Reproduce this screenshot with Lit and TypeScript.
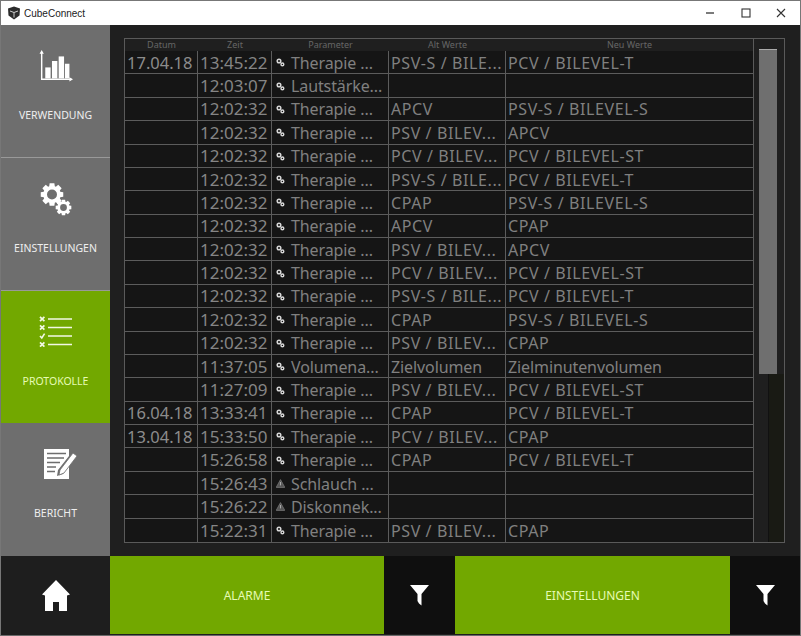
import { LitElement, html, css, svg } from "lit";
import { customElement } from "lit/decorators.js";

type Row = [string, string, "l" | "w", string, string, string];
const T = "Therapie ...";
const rows: Row[] = [
  ["17.04.18", "13:45:22", "l", T, "PSV-S / BILE...", "PCV / BILEVEL-T"],
  ["", "12:03:07", "l", "Lautstärke...", "", ""],
  ["", "12:02:32", "l", T, "APCV", "PSV-S / BILEVEL-S"],
  ["", "12:02:32", "l", T, "PSV / BILEV...", "APCV"],
  ["", "12:02:32", "l", T, "PCV / BILEV...", "PCV / BILEVEL-ST"],
  ["", "12:02:32", "l", T, "PSV-S / BILE...", "PCV / BILEVEL-T"],
  ["", "12:02:32", "l", T, "CPAP", "PSV-S / BILEVEL-S"],
  ["", "12:02:32", "l", T, "APCV", "CPAP"],
  ["", "12:02:32", "l", T, "PSV / BILEV...", "APCV"],
  ["", "12:02:32", "l", T, "PCV / BILEV...", "PCV / BILEVEL-ST"],
  ["", "12:02:32", "l", T, "PSV-S / BILE...", "PCV / BILEVEL-T"],
  ["", "12:02:32", "l", T, "CPAP", "PSV-S / BILEVEL-S"],
  ["", "12:02:32", "l", T, "PSV / BILEV...", "CPAP"],
  ["", "11:37:05", "l", "Volumena...", "Zielvolumen", "Zielminutenvolumen"],
  ["", "11:27:09", "l", T, "PSV / BILEV...", "PCV / BILEVEL-ST"],
  ["16.04.18", "13:33:41", "l", T, "CPAP", "PCV / BILEVEL-T"],
  ["13.04.18", "15:33:50", "l", T, "PCV / BILEV...", "CPAP"],
  ["", "15:26:58", "l", T, "CPAP", "PCV / BILEVEL-T"],
  ["", "15:26:43", "w", "Schlauch ...", "", ""],
  ["", "15:26:22", "w", "Diskonnek...", "", ""],
  ["", "15:22:31", "l", T, "PSV / BILEV...", "CPAP"],
];

const linkIcon = svg`<svg class="ri" width="9" height="9" viewBox="0 0 9 9"><circle cx="3" cy="3" r="1.800" fill="none" stroke="#d8d8d8" stroke-width="1.500"/><circle cx="6.400" cy="6.400" r="1.400" fill="none" stroke="#d8d8d8" stroke-width="1.400"/></svg>`;
const warnIcon = svg`<svg class="ri" width="9" height="9" viewBox="0 0 9 9"><path d="M4.500 .6 8.800 8.400H.2Z" fill="#555" stroke="#777" stroke-width=".8"/><path d="M4.500 3v3.400" stroke="#aaa" stroke-width="1.100"/></svg>`;

const chartIcon = svg`<svg width="34" height="33" viewBox="0 0 38 36" preserveAspectRatio="none" fill="#fff"><path d="M3 3v29h33" fill="none" stroke="#fff" stroke-width="1.600"/><path d="M3 0 5.400 4H.6ZM38 32l-4-2.400v4.800Z"/><rect x="7" y="19" width="6" height="12"/><rect x="14.500" y="12" width="6" height="19"/><rect x="22" y="7" width="6" height="24"/><rect x="29" y="15" width="5" height="16"/></svg>`;

const gear = (cx: number, cy: number, r: number, hole: number, teeth: number) => {
  let d = "";
  for (let i = 0; i < teeth; i++) {
    const a = (i * 2 * Math.PI) / teeth;
    const w = 0.26;
    const p = (ang: number, rad: number) => `${(cx + rad * Math.cos(ang)).toFixed(2)} ${(cy + rad * Math.sin(ang)).toFixed(2)}`;
    d += `${i ? "L" : "M"}${p(a - w * 1.25, r * 0.76)}L${p(a - w * 0.8, r)}L${p(a + w * 0.8, r)}L${p(a + w * 1.25, r * 0.76)}`;
  }
  d += "Z";
  d += `M${cx - hole} ${cy}a${hole} ${hole} 0 1 0 ${2 * hole} 0a${hole} ${hole} 0 1 0 ${-2 * hole} 0Z`;
  return d;
};
const gearsIcon = svg`<svg width="32" height="34" viewBox="0 0 32 34" fill="#fff"><path fill-rule="evenodd" d="${gear(12, 12.5, 11.5, 5, 8)}"/><path fill-rule="evenodd" d="${gear(23.5, 25.5, 8, 3.4, 8)}"/></svg>`;

const x = (y: number) => svg`<path d="M1 ${y - 2.2}l4.400 4.400M5.400 ${y - 2.2}l-4.400 4.400" stroke="#f2f8e4" stroke-width="1.700" fill="none"/>`;
const line = (y: number) => svg`<rect x="9" y="${y - 0.75}" width="24" height="1.500" fill="#f2f8e4"/>`;
const listIcon = svg`<svg width="34" height="31" viewBox="0 0 34 31">${x(3)}${line(3)}${x(11.5)}${line(11.5)}<path d="M1 20l1.800 2 2.800-4.400" stroke="#f2f8e4" stroke-width="1.600" fill="none"/>${line(20)}${x(28.5)}${line(28.5)}</svg>`;

const reportIcon = svg`<svg class="shift" width="34" height="31" viewBox="0 0 34 31"><path d="M0 0h25v7L14 21l-1 6 6-2 6-8v13H0Z" fill="#fff"/><path d="M3 4.500h19M3 9h17M3 13.500h13M3 18h9M3 22.500h8" stroke="#6e6e6e" stroke-width="1.500"/><path d="M16 21 29 4l4 3-13 17-5 2Z" fill="#fff" stroke="#6e6e6e" stroke-width=".8"/></svg>`;

const homeIcon = svg`<svg width="28" height="31" viewBox="0 0 28 31"><path d="M14 0 28 14.500 25 15.500V31H17V22H11V31H3V15.500L0 14.500Z" fill="#fff"/></svg>`;
const filterIcon = svg`<svg width="19" height="21" viewBox="0 0 19 21"><path d="M0 0H19L11.500 9V20.500L9 18.500 7.500 16V9Z" fill="#fff"/></svg>`;

const caps = (s: string) => /^(PSV|PCV|CPAP|APCV)/.test(s);

@customElement("app-root")
export class AppRoot extends LitElement {
  static styles = css`
    :host {
      display: block;
      width: 801px;
      height: 636px;
      box-sizing: border-box;
      background: #1e1e1e;
      border: 1px solid #777;
      border-bottom-color: #6a6a6a;
      font-family: "Noto Sans", "Liberation Sans", sans-serif;
      overflow: hidden;
    }
    .title {
      height: 24px;
      background: #fff;
      display: flex;
      align-items: center;
      color: #222;
      font-size: 10px;
      font-family: "Liberation Sans", sans-serif;
    }
    .logo { margin: 0 3px 0 6px; display: block; }
    .app { flex: 1; }
    .wc { display: flex; padding-right: 1px; }
    .wc span { width: 35.5px; height: 24px; display: flex; align-items: center; justify-content: center; }
    .body { display: grid; grid-template-columns: 109px 1fr; grid-template-rows: 531px 78px; height: 609px; }
    .side { display: grid; grid-template-rows: repeat(4, 1fr); background: #6e6e6e; }
    .nav {
      display: flex;
      flex-direction: column;
      align-items: center;
      color: #eee;
      font-size: 10.5px;
      box-sizing: border-box;
      border-bottom: 1px solid #999;
    }
    .nav:last-child { border-bottom: 0; }
    .nav.on { background: #72a800; color: #e6fbb4; border-bottom: 1px solid #72a800; }
    .ic { height: 54px; margin-top: 14px; display: flex; align-items: center; justify-content: center; }
    .shift { margin-left: 11px; }
    .lb { margin-top: 14px; line-height: 16px; }
    .main { padding: 13px 15px 13px 14px; box-sizing: border-box; background: #1f1f1f; min-width: 0; min-height: 0; height: 531px; }
    .frame {
      height: 100%;
      box-sizing: border-box;
      border: 1px solid #5a5a5a;
      display: grid;
      grid-template-columns: 629px 1fr;
      grid-template-rows: minmax(0, 1fr);
    }
    .tbl { display: grid; grid-template-rows: 12px repeat(21, minmax(0, 1fr)); border-right: 1px solid #5a5a5a; min-width: 0; min-height: 0; }
    .row { display: grid; grid-template-columns: 73px 74px 117px 117px 1fr; grid-template-rows: minmax(0, 1fr); background: #151515; border-bottom: 1px solid #5c5c5c; min-height: 0; }
    .row:last-child { border-bottom: 0; }
    .row.head { background: #1f1f1f; border-bottom: 0; }
    .cell {
      color: #808080;
      font-size: 16px;
      line-height: 20px;
      padding: 1px 0 0 2px;
      box-sizing: border-box;
      white-space: nowrap;
      overflow: hidden;
      min-height: 0;
      border-right: 1px solid #5c5c5c;
      display: flex;
      align-items: center;
      letter-spacing: -0.1px;
    }
    .cell:last-child { border-right: 0; }
    .cell.date { font-size: 16.5px; letter-spacing: 0; color: #8c8c8c; }
    .cell.time { font-size: 17px; letter-spacing: 0; color: #858585; }
    .cell.caps { letter-spacing: 0.6px; }
    .head .cell {
      font-size: 9px;
      line-height: 12px;
      color: #666;
      justify-content: center;
      border-right: 0;
      padding: 0;
      letter-spacing: 0;
    }
    .ri { margin: 0 6px 0 2px; flex: none; }
    .bar { background: #1f1f1f; display: flex; flex-direction: column; padding-top: 10px; min-height: 0; }
    .thumb {
      width: 18px;
      height: 325px;
      margin-left: 5px;
      flex: none;
      background: #6f6f6f;
      border-top: 1px solid #aaa;
      box-sizing: border-box;
    }
    .track { flex: 1; margin-left: 14px; background: #191a14; border-left: 1px solid #111; box-sizing: border-box; }
    .foot {
      grid-column: 1 / 3;
      display: grid;
      grid-template-columns: 109px 274px 71px 275px 1fr;
      background: #111;
    }
    .home { background: #1e1e1e; display: flex; align-items: center; justify-content: center; }
    .btn { background: #72a800; color: #e6fbb4; font-size: 12px; display: flex; align-items: center; justify-content: center; }
    .fil { display: flex; align-items: center; justify-content: center; background: #0f0f0f; }
  `;

  render() {
    const nav = [
      ["VERWENDUNG", chartIcon, false],
      ["EINSTELLUNGEN", gearsIcon, false],
      ["PROTOKOLLE", listIcon, true],
      ["BERICHT", reportIcon, false],
    ] as const;
    return html`
      <div class="title">
        <svg class="logo" width="14" height="14" viewBox="0 0 14 14"><path d="M7 .5 13 2.500 12.500 9.500 7 13.500 1.500 9.500 1 2.500Z" fill="#2b2b2b"/><path d="M3 5l4 1.500v5M11 5 7 6.500" stroke="#ccc" stroke-width="1" fill="none"/></svg>
        <span class="app">CubeConnect</span>
        <div class="wc">
          <span><svg width="10" height="10" viewBox="0 0 10 10"><path d="M1 5h8" stroke="#333" stroke-width="1.300"/></svg></span>
          <span><svg width="10" height="10" viewBox="0 0 10 10"><rect x="1" y="1" width="8" height="8" fill="none" stroke="#333" stroke-width="1.100"/></svg></span>
          <span><svg width="10" height="10" viewBox="0 0 10 10"><path d="M1 1l8 8M9 1l-8 8" stroke="#333" stroke-width="1.100"/></svg></span>
        </div>
      </div>
      <div class="body">
        <div class="side">
          ${nav.map(([l, i, on]) => html`<div class="nav ${on ? "on" : ""}"><div class="ic">${i}</div><div class="lb">${l}</div></div>`)}
        </div>
        <div class="main">
          <div class="frame">
            <div class="tbl">
              <div class="row head">
                ${["Datum", "Zeit", "Parameter", "Alt Werte", "Neu Werte"].map((h) => html`<div class="cell">${h}</div>`)}
              </div>
              ${rows.map(
                (r) => html`<div class="row">
                  <div class="cell date">${r[0]}</div>
                  <div class="cell time">${r[1]}</div>
                  <div class="cell">${r[2] === "l" ? linkIcon : warnIcon}${r[3]}</div>
                  <div class="cell ${caps(r[4]) ? "caps" : ""}">${r[4]}</div>
                  <div class="cell ${caps(r[5]) ? "caps" : ""}">${r[5]}</div>
                </div>`
              )}
            </div>
            <div class="bar"><div class="thumb"></div><div class="track"></div></div>
          </div>
        </div>
        <div class="foot">
          <div class="home">${homeIcon}</div>
          <div class="btn">ALARME</div>
          <div class="fil">${filterIcon}</div>
          <div class="btn">EINSTELLUNGEN</div>
          <div class="fil">${filterIcon}</div>
        </div>
      </div>
    `;
  }
}
